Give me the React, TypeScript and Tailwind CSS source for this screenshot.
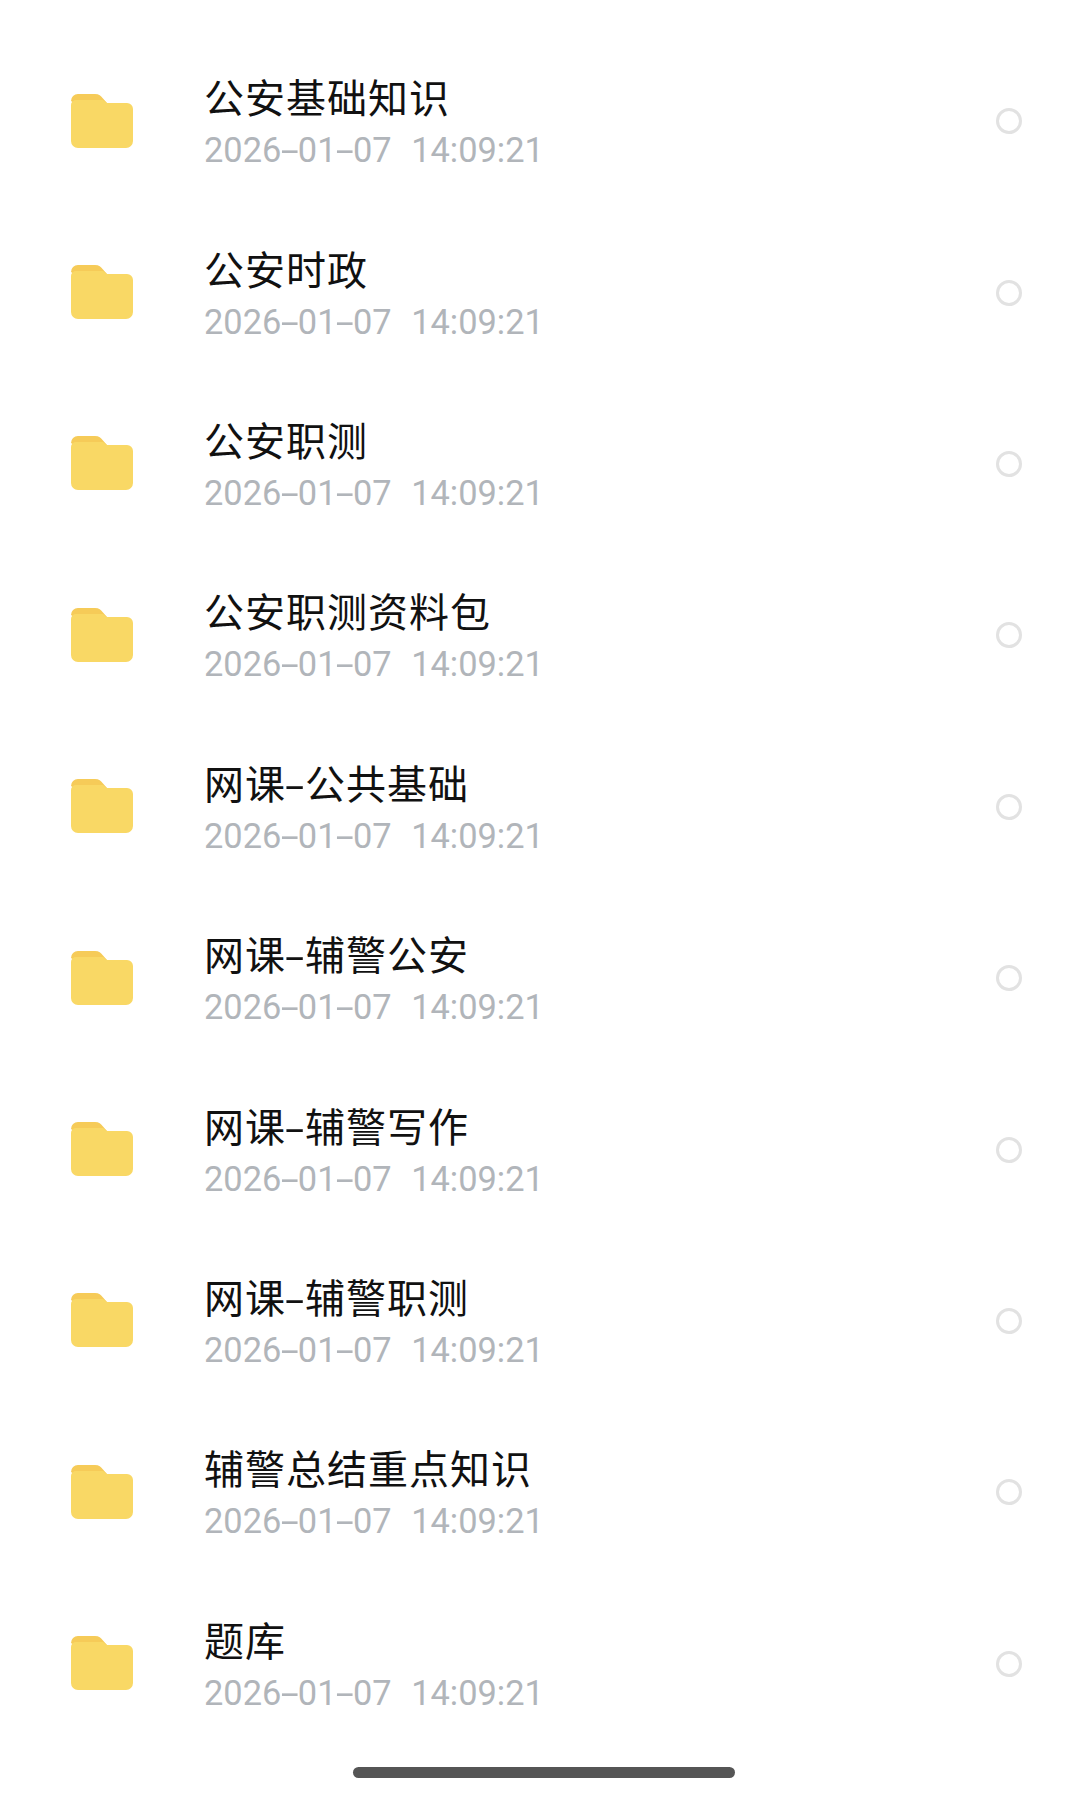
const names = ["公安基础知识","公安时政","公安职测","公安职测资料包","网课-公共基础","网课-辅警公安","网课-辅警写作","网课-辅警职测","辅警总结重点知识","题库"];

function Folder() {
  return (
    <svg width="64" height="56" viewBox="0 0 64 56" className="shrink-0 blur-[0.6px] -mt-[1px]">
      <path d="M1 8a7 7 0 0 1 7-7h17c4 0 6 2 8 4.5L37 10H4z" fill="#f6cb58" />
      <path d="M1 12a5 5 0 0 1 5-5h27l4 3h20a6 6 0 0 1 6 6v32a7 7 0 0 1-7 7H8a7 7 0 0 1-7-7z" fill="#f9d865" />
    </svg>
  );
}

function Dash({ title }: { title?: boolean }) {
  return (
    <span className={title ? "inline-block scale-x-[1.6] mx-[2px]" : "inline-block scale-x-[1.9] mx-[3.5px]"}>-</span>
  );
}

function Title({ text }: { text: string }) {
  const i = text.indexOf("-");
  if (i < 0) return <>{text}</>;
  return (
    <>
      {text.slice(0, i)}
      <Dash title />
      {text.slice(i + 1)}
    </>
  );
}

export default function App() {
  return (
    <div className="w-[1080px] h-[1796px] bg-white overflow-hidden flex flex-col" style={{fontFamily: '"Noto Sans CJK SC", sans-serif'}}>
      <div className="pt-[35.5px] flex flex-col">
        {names.map((n) => (
          <div key={n} className="h-[171.4px] flex items-center pl-[70px] pr-[58px]">
            <Folder />
            <div className="ml-[70px] flex-1 flex flex-col pt-[4px]">
              <div className="text-[40px] leading-[50px] text-[#111111] tracking-[1px] whitespace-pre"><Title text={n} /></div>
              <div className="text-[34.4px] leading-[50px] mt-[4px] text-[#b1b5ba] whitespace-pre font-normal" style={{fontFamily: 'Roboto, sans-serif'}}>2026<Dash />01<Dash />07<span className="ml-[2.5px]">  14:09:21</span></div>
            </div>
            <div className="w-[26px] h-[26px] rounded-full border-[3px] border-[#e2e2e2]" />
          </div>
        ))}
      </div>
      <div className="mt-auto mb-[18px] ml-[353px] w-[382px] h-[11px] rounded-full bg-[#555555]" />
    </div>
  );
}
